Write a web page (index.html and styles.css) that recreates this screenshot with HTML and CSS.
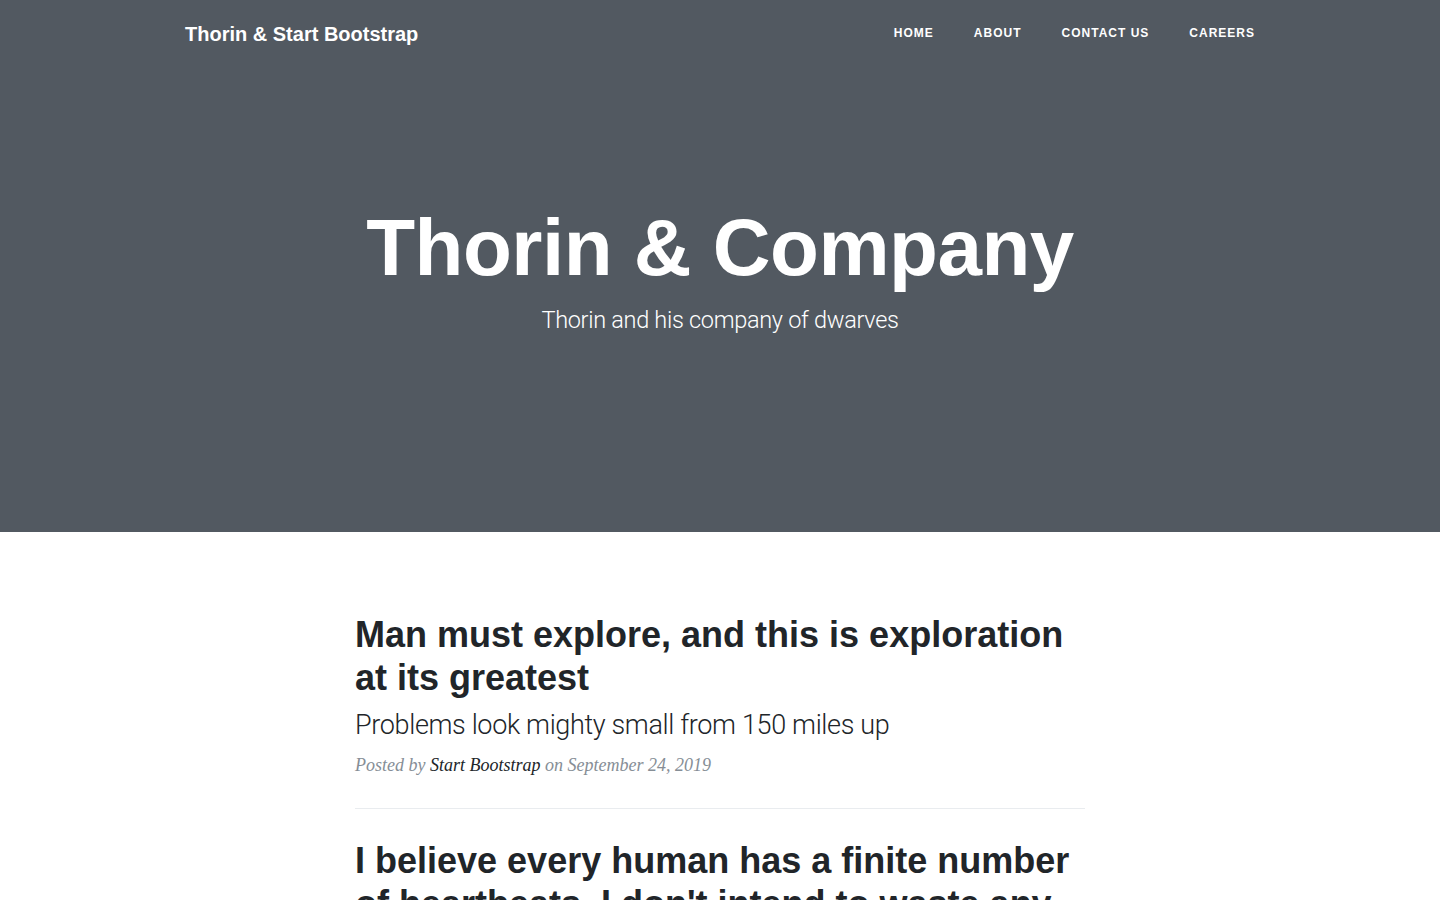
FILE: index.html
```html
<!DOCTYPE html>
<html lang="en">
<head>
<meta charset="utf-8">
<title>Thorin &amp; Company</title>
<link rel="stylesheet" href="styles.css">
</head>
<body>
<nav class="navbar">
  <div class="nav-inner">
    <a class="brand" href="#">Thorin &amp; Start Bootstrap</a>
    <ul class="nav-links">
      <li><a href="#">Home</a></li>
      <li><a href="#">About</a></li>
      <li><a href="#">Contact Us</a></li>
      <li><a href="#">Careers</a></li>
    </ul>
  </div>
</nav>
<header class="masthead">
  <div class="page-heading">
    <h1>Thorin &amp; Company</h1>
    <span class="subheading">Thorin and his company of dwarves</span>
  </div>
</header>
<main class="posts">
  <article class="post-preview">
    <a href="#">
      <h2 class="post-title">Man must explore, and this is exploration at its greatest</h2>
      <h3 class="post-subtitle">Problems look mighty small from 150 miles up</h3>
    </a>
    <p class="post-meta">Posted by <a href="#">Start Bootstrap</a> on September 24, 2019</p>
  </article>
  <hr class="divider">
  <article class="post-preview">
    <a href="#">
      <h2 class="post-title">I believe every human has a finite number of heartbeats. I don't intend to waste any of mine.</h2>
    </a>
    <p class="post-meta">Posted by <a href="#">Start Bootstrap</a> on September 18, 2019</p>
  </article>
</main>
</body>
</html>
```
FILE: styles.css
```css
* { box-sizing: border-box; }
html, body { margin: 0; padding: 0; }
body {
  font-family: "Liberation Sans", Arial, sans-serif;
  color: #212529;
  background: #fff;
}
a { text-decoration: none; color: inherit; }

.navbar {
  position: absolute;
  top: 0;
  left: 0;
  right: 0;
  z-index: 10;
}
.nav-inner {
  width: 1110px;
  margin: 0 auto;
  display: flex;
  align-items: center;
  justify-content: space-between;
  height: 68px;
}
.brand {
  color: #fff;
  font-weight: 700;
  font-size: 20px;
  margin-left: 20px;
  letter-spacing: 0;
}
.nav-links {
  list-style: none;
  margin: 0;
  padding: 0;
  display: flex;
  margin-bottom: 2px;
}
.nav-links a {
  display: block;
  padding: 10px 20px;
  color: #fff;
  font-size: 12px;
  font-weight: 700;
  letter-spacing: 1px;
  text-transform: uppercase;
}

.masthead {
  background-color: #525961;
  height: 532px;
  margin-bottom: 81px;
}
.page-heading {
  padding-top: 200px;
  text-align: center;
  color: #fff;
}
.page-heading h1 {
  margin: 0;
  font-size: 80px;
  font-weight: 700;
  line-height: 1.2;
  letter-spacing: -0.5px;
}
.subheading {
  display: block;
  margin-top: 12px;
  font-family: Roboto, "Liberation Sans", sans-serif;
  font-weight: 300;
  font-size: 23.5px;
  letter-spacing: -0.3px;
  line-height: 1.1;
}

.posts {
  width: 730px;
  margin: 0 auto;
}
.post-title {
  margin: 30px 0 10px;
  font-size: 36px;
  font-weight: 700;
  line-height: 1.2;
}
.post-subtitle {
  margin: 0 0 10px;
  font-family: Roboto, "Liberation Sans", sans-serif;
  font-weight: 300;
  font-size: 27px;
  letter-spacing: -0.35px;
  line-height: 1.2;
}
.post-meta {
  margin: 0 0 29px;
  font-family: "Liberation Serif", "Times New Roman", serif;
  font-style: italic;
  font-size: 18px;
  line-height: 1.5;
  color: #868e96;
}
.post-meta a { color: #212529; }
.divider {
  border: 0;
  border-top: 1px solid #e9ecef;
  margin: 0;
}
```
